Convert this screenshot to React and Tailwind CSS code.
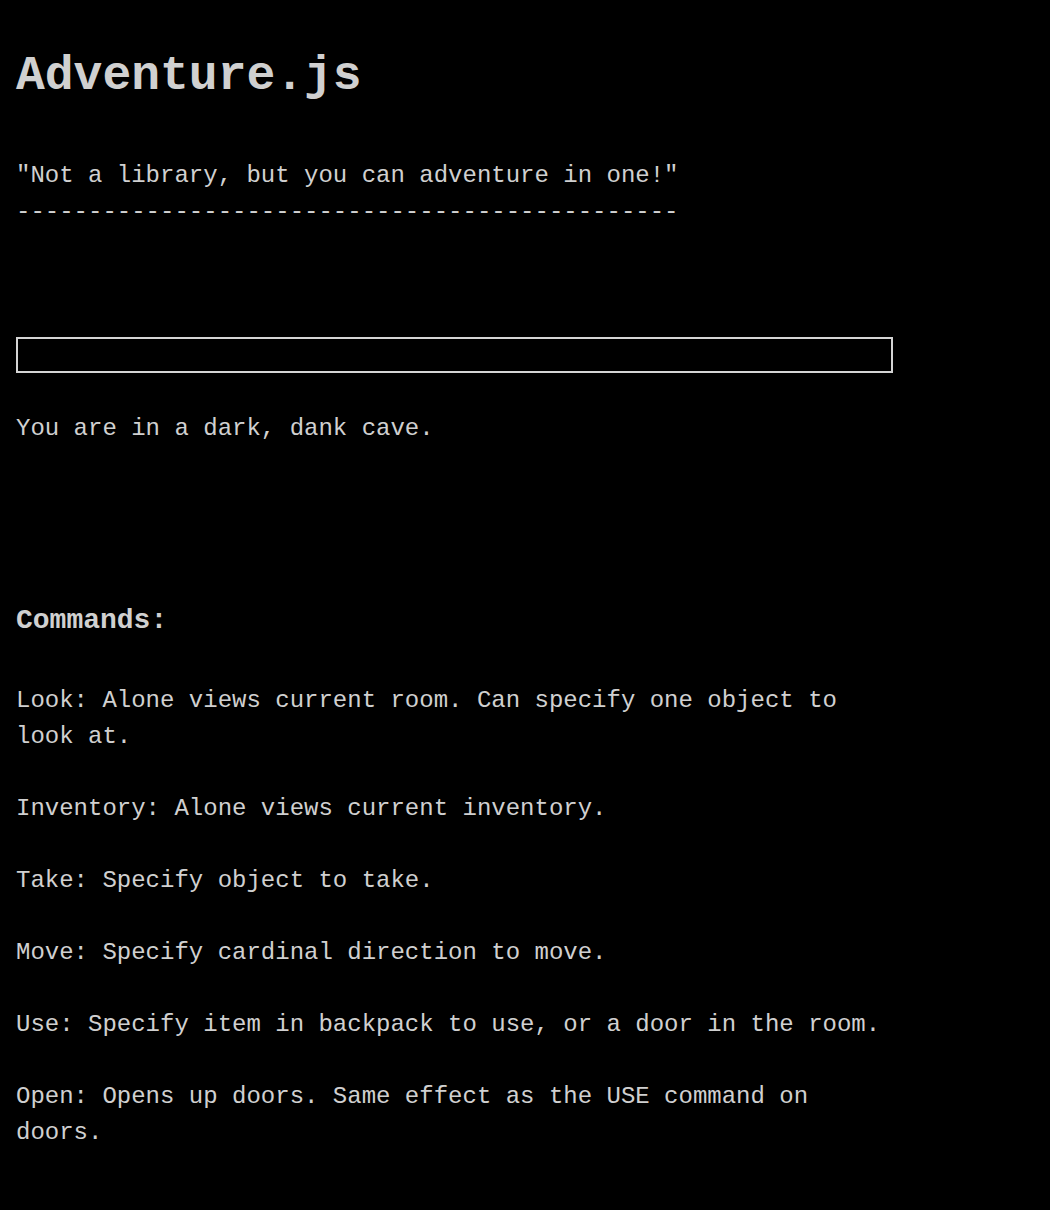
export default function App() {
  const cmds = [
    "Look: Alone views current room. Can specify one object to look at.",
    "Inventory: Alone views current inventory.",
    "Take: Specify object to take.",
    "Move: Specify cardinal direction to move.",
    "Use: Specify item in backpack to use, or a door in the room.",
    "Open: Opens up doors. Same effect as the USE command on doors.",
  ];
  return (
    <div
      className="min-h-[1210px] w-full bg-black pl-4 text-[#d0d0d0]"
      style={{ fontFamily: '"Liberation Mono", "DejaVu Sans Mono", monospace' }}
    >
      <div className="pt-[40px] text-[48px] font-bold leading-[72px]">Adventure.js</div>
      <div className="mt-[46px] text-[24px] leading-[36px]">"Not a library, but you can adventure in one!"</div>
      <div className="text-[24px] leading-[36px]">----------------------------------------------</div>
      <input
        type="text"
        className="mt-[107px] block h-[36px] w-[877px] border-2 border-[#d4d4d4] bg-black px-1 text-[24px] text-[#d0d0d0] outline-none"
      />
      <div className="mt-[38px] text-[24px] leading-[36px]">You are in a dark, dank cave.</div>
      <div className="mt-[153px] text-[28px] font-bold leading-[42px]">Commands:</div>
      <div className="mt-[41px] flex w-[877px] flex-col gap-[36px] text-[24px] leading-[36px]">
        {cmds.map((c) => (
          <div key={c}>{c}</div>
        ))}
      </div>
    </div>
  );
}
